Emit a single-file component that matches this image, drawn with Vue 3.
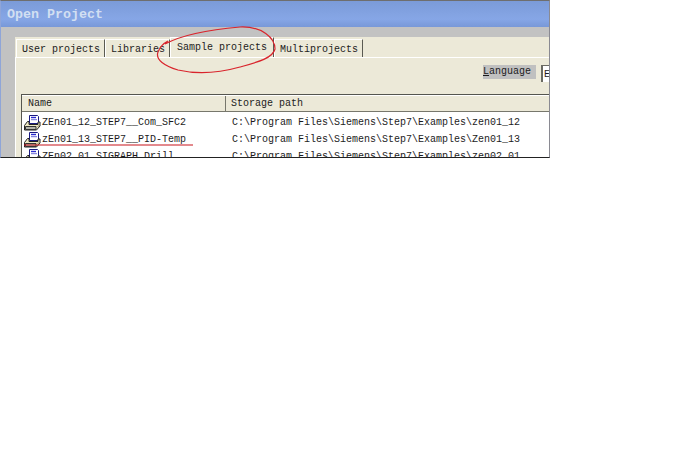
<script setup>
const rows = [
  { name: 'ZEn01_12_STEP7__Com_SFC2', path: 'C:\\Program Files\\Siemens\\Step7\\Examples\\zen01_12' },
  { name: 'zEn01_13_STEP7__PID-Temp', path: 'C:\\Program Files\\Siemens\\Step7\\Examples\\Zen01_13' },
  { name: 'ZEn02_01_SIGRAPH_Drill', path: 'C:\\Program Files\\Siemens\\Step7\\Examples\\zen02_01' }
]
const tabs = ['User projects', 'Libraries', 'Sample projects', 'Multiprojects']
</script>

<template>
  <div class="page">
    <div class="window">
      <div class="title">Open Project</div>
      <div class="body">
        <div class="tabs">
          <div v-for="t in tabs" :key="t" class="tab" :class="{ active: t === 'Sample projects' }">{{ t }}</div>
        </div>
        <div class="panel">
          <div class="langrow">
            <span class="lang"><u>L</u>anguage</span>
            <span class="combo">E</span>
          </div>
          <div class="list">
            <div class="head">
              <div class="c1">Name</div>
              <div class="c2">Storage path</div>
            </div>
            <div v-for="r in rows" :key="r.name" class="row">
              <div class="c1 cell">
                <svg class="ico" width="17" height="16" viewBox="0 0 17 16">
                  <path d="M5.5 .5h8l1 1v7h-9z" fill="#fff" stroke="#1a1a80" />
                  <path d="M7 2.5h5" stroke="#2a2ad0" stroke-width="1.4" />
                  <path d="M7 4.7h6" stroke="#6a6ad8" />
                  <path d="M3.5 6.5l-3 4v4.5h12l3.500-4v-4h-2v2.500h-9v-3z" fill="#efe9c4" stroke="#222" />
                  <path d="M1.500 11.500h10.500v3h-10.500z" fill="#b4b4aa" stroke="#333" />
                  <path d="M13.500 12l2-2" stroke="#8a8468" />
                </svg>
                <span>{{ r.name }}</span>
              </div>
              <div class="c2 cell">{{ r.path }}</div>
            </div>
          </div>
        </div>
      </div>
    </div>
    <svg class="marks" width="549" height="158" viewBox="0 0 549 158">
      <path d="M165 44C180 36 205 30 240 27C262 26 275 38 275 49C273 58 258 62 240 67C215 74 195 74 178 70C165 66 155 60 158 52C160 47 164 43 168 41" fill="none" stroke="#d9242c" stroke-width="1.2" />
      <path d="M24 145H193" stroke="#c8141c" stroke-width="1.2" />
    </svg>
  </div>
</template>

<style scoped>
.page {
  position: relative;
  width: 691px;
  height: 471px;
  background: #fff;
  font-family: "Liberation Mono", "DejaVu Sans Mono", monospace;
  font-size: 10px;
  color: #1c1c1c;
  overflow: hidden;
}
.window {
  width: 550px;
  height: 158px;
  box-sizing: border-box;
  border-top: 1px solid #6e6e6e;
  border-left: 1px solid #8fa5d8;
  border-right: 1px solid #8a8a92;
  border-bottom: 1px solid #222;
  display: flex;
  flex-direction: column;
  overflow: hidden;
  background: #c2c2c2;
}
.title {
  height: 26px;
  flex: none;
  background: linear-gradient(#7b9bd8, #86a6e6 70%, #7898d8);
  color: #d2dff2;
  font-weight: bold;
  font-size: 13.33px;
  line-height: 27px;
  padding-left: 6px;
}
.body {
  flex: 1;
  min-height: 0;
  padding: 10px 0 0 14px;
  display: flex;
  flex-direction: column;
}
.tabs {
  display: flex;
  height: 20px;
  flex: none;
  background: #ece9d8;
  padding-left: 1px;
  align-items: flex-end;
}
.tab {
  height: 18px;
  line-height: 20px;
  padding: 0 4px 0 5px;
  border-right: 1px solid #5a5a52;
  border-left: 1px solid #fff;
  border-top: 1px solid #fff;
  box-sizing: border-box;
}
.tab.active {
  height: 20px;
  line-height: 20px;
  padding: 0 6px;
}
.panel {
  flex: 1;
  min-height: 0;
  background: #ece9d8;
  border-top: 1px solid #fff;
  border-left: 1px solid #fff;
  padding: 0 0 0 5px;
  display: flex;
  flex-direction: column;
}
.langrow {
  height: 36px;
  flex: none;
  display: flex;
  justify-content: flex-end;
  align-items: flex-start;
  padding-top: 7px;
  box-sizing: border-box;
  gap: 5px;
}
.lang {
  background: #c0c0c0;
  height: 14px;
  line-height: 14px;
  width: 53px;
}
.combo {
  width: 8px;
  height: 17px;
  line-height: 17px;
  background: #fff;
  border-left: 2px solid #6a6a62;
  border-top: 1px solid #6a6a62;
  box-sizing: border-box;
  padding-left: 1px;
}
.list {
  flex: 1;
  min-height: 0;
  overflow: hidden;
  background: #fff;
  border-left: 1px solid #55554f;
  border-top: 1px solid #55554f;
}
.head {
  display: flex;
  height: 17px;
  line-height: 16px;
  margin-bottom: 2px;
  background: #ece9d8;
  border-top: 1px solid #fff;
  border-bottom: 1px solid #77776c;
  box-sizing: border-box;
}
.head .c1 {
  border-right: 1px solid #77776c;
  box-sizing: border-box;
  padding-left: 6px;
}
.head .c2 {
  padding-left: 5px;
}
.c1 {
  width: 204px;
  flex: none;
}
.c2 {
  flex: 1;
  padding-left: 6px;
  white-space: nowrap;
}
.row {
  display: flex;
  height: 17px;
  line-height: 17px;
  flex: none;
}
.cell {
  display: flex;
  align-items: center;
}
.ico {
  flex: none;
  margin: 0 1px 0 2px;
}
.marks {
  position: absolute;
  left: 0;
  top: 0;
  pointer-events: none;
}
</style>
